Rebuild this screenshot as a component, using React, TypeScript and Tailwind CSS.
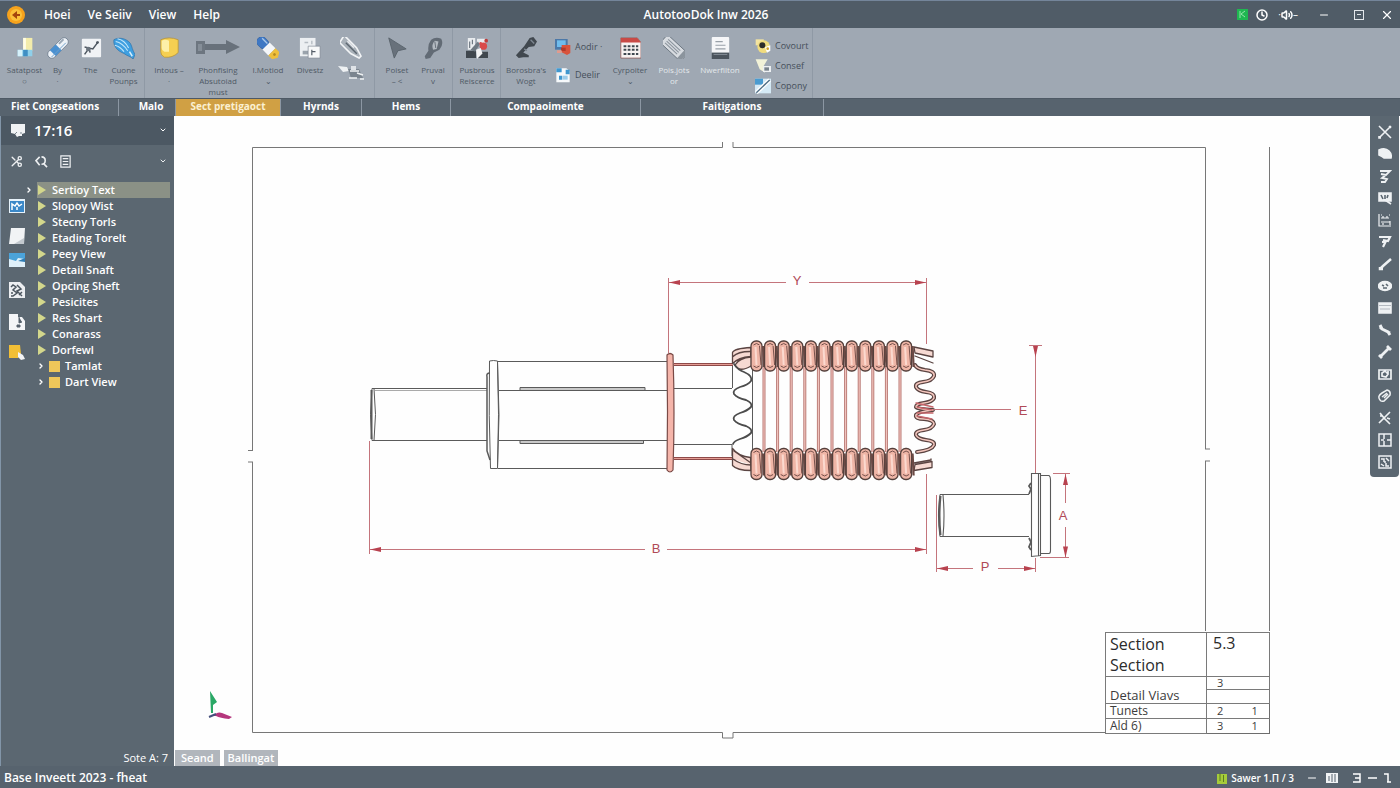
import React, { useState } from "react";
import { clsx } from "clsx";
import { ChevronDown, ChevronRight, Clock, Minus, Scissors, Volume2, X } from "lucide-react";

/* ---------- ribbon icons, all on a 24x24 grid ---------- */

const ribbonArt: Record<string, React.ReactNode> = {
  stand: (
    <>
      <path d="M10 1h10v14H10z" fill="#f3ecab" />
      <path d="M10 1h3v14h-3z" fill="#fffde6" />
      <path d="M4 14h16v7H4z" fill="#8fd0ea" />
      <path d="M10 14h5v7h-5z" fill="#3f8fc4" />
      <path d="M4 14h5v7H4z" fill="#d6f1fa" />
    </>
  ),
  capsule: (
    <g transform="rotate(-45 12 12)">
      <rect x="-2" y="7.500" width="28" height="9" rx="4.500" fill="#eef3f8" stroke="#5d6d80" strokeWidth=".7" />
      <rect x="4" y="7.500" width="9" height="9" fill="#4a90d0" />
      <path d="M16 9.500h7" stroke="#9aa8b6" strokeWidth="2" />
      <path d="M0 14h22" stroke="#6f9fc9" />
    </g>
  ),
  plot: (
    <>
      <rect x="2" y="2" width="21" height="20" rx="1" fill="#f0f2f5" />
      <path d="M5 19l5-7 4 1 6-8M5 11l5 1 1 5" fill="none" stroke="#4d5660" strokeWidth="1.600" />
      <circle cx="9" cy="13" r="2.500" fill="#6b747e" />
      <circle cx="19" cy="6" r="1.500" fill="#4d5660" />
    </>
  ),
  leaf: (
    <>
      <path d="M1 3c5-3 13-2 18 4 2 4 2 7 5 12l-2 5c-3-3-6-3-10-6C4 15 0 9 1 3z" fill="#3f9fe0" stroke="#2a6fa8" strokeWidth=".7" />
      <path d="M3 5c5 1 9 4 13 10M5 2c5 1 9 4 12 10M2 9c4 1 7 3 10 7" fill="none" stroke="#c4e8fb" strokeWidth="1.200" />
      <path d="M18 16l3 5" stroke="#d8f0fc" strokeWidth="1.600" />
    </>
  ),
  shield: (
    <>
      <path d="M3 3q9-4 19 0v14q-6 6-15 5-4-2-4-6z" fill="#f5cf52" stroke="#b98e22" strokeWidth=".7" />
      <path d="M4 4q4-2 8 0v12H7q-3-1-3-4z" fill="#fdf0a8" />
    </>
  ),
  pencil: (
    <g transform="rotate(45 12 12)">
      <rect x="-3" y="6.500" width="13" height="11" rx="4" fill="#3f78c4" stroke="#2d5a96" strokeWidth=".6" />
      <path d="M0 9h8" stroke="#a9c8ea" strokeWidth="1.500" />
      <rect x="9" y="6.500" width="9" height="11" fill="#f4f6f9" />
      <path d="M18 6.500h6l3 5.500-3 5.500h-6z" fill="#eebf3c" />
      <circle cx="22" cy="12" r="1.500" fill="#b58a22" />
    </g>
  ),
  sheets: (
    <>
      <path d="M1 1h17v20H1z" fill="#eceff2" />
      <path d="M4 15h6v4H4z" fill="#9aa3ac" />
      <path d="M14 4v4M6 6h4" stroke="#b5bcc3" strokeWidth="1.500" />
      <path d="M10 10h13v13H10z" fill="#f8f9fa" stroke="#7a848e" strokeWidth=".7" />
      <path d="M14 14v6M14 16h4" stroke="#555e68" strokeWidth="1.300" />
    </>
  ),
  clip: (
    <g transform="rotate(45 12 12)" fill="none" stroke="#f2f4f6" strokeWidth="1.800">
      <path d="M-3 7.500h19l10 3v3l-10 3H-1z" fill="#a9b1b9" />
      <path d="M4 12h17" stroke="#5c6670" strokeWidth="1.500" />
      <path d="M4 9.500h10" strokeWidth="1.200" />
    </g>
  ),
  arrow: <path d="M3 1l19 12-9 2-4 8z" fill="#68717b" stroke="#59626b" />,
  knob: (
    <>
      <path d="M10 3q5-4 11-1 3 6-2 12l-6 3-4 6-5 1-1-3 4-6q-1-7 3-12z" fill="#626b75" />
      <path d="M14 4l4 1-2 8-4 1q-2-6 2-10z" fill="#b3bac1" />
      <path d="M14 5l1 7" stroke="#626b75" />
    </>
  ),
  people: (
    <>
      <path d="M0 15h11v8H0zM13 16h11v7H13z" fill="#40474e" />
      <path d="M2 1h8v13H2zM12 2h9v5h-9z" fill="#e9ecef" />
      <path d="M4 5v7M7 3v5" stroke="#6f7983" strokeWidth="1.300" />
      <path d="M5 14l8-9 2 3-5 8z" fill="#6f7983" />
      <circle cx="19" cy="10" r="4" fill="#d94a4a" />
      <path d="M11 14l5-2 2 6-6 6z" fill="#f3f4f5" />
      <circle cx="22" cy="4" r="2" fill="#c03a3a" />
      <circle cx="16" cy="7" r="1.500" fill="#d94a4a" />
    </>
  ),
  torch: (
    <>
      <path d="M16 1l4-1 4 5-3 5-6 1-6 6 6 3v2H9l-5 1-3-3 9-10z" fill="#41484f" />
      <path d="M17 3l4 4M10 13l3 2" stroke="#7c8690" strokeWidth="1.500" />
    </>
  ),
  calendar: (
    <>
      <path d="M2 1h18l4 5v17H2z" fill="#f8f3f2" stroke="#8d5450" strokeWidth=".8" />
      <path d="M2 1h18l4 5H2z" fill="#c94a46" />
      <path d="M5 10h16M5 14h16M5 18.500h16" stroke="#3f4850" strokeWidth="2.200" strokeDasharray="3 1.500" />
    </>
  ),
  battery: (
    <g transform="rotate(43 12 12)">
      <rect x="-3" y="6" width="30" height="12" rx="1.500" fill="#d7dbe0" stroke="#6b7580" />
      <path d="M1 9.500h18M1 12h18M1 14.500h18" stroke="#8b949d" strokeWidth="1.200" />
      <rect x="22" y="6.500" width="4.500" height="11" fill="#8b949d" />
    </g>
  ),
  drive: (
    <>
      <rect x="3" y="0" width="19" height="18" rx="1" fill="#f5f6f8" />
      <path d="M7 5h8M7 9h11M7 13h11" stroke="#98a0a8" strokeWidth="1.300" />
      <path d="M3 17h19v7H3z" fill="#4b545d" />
      <path d="M5 19h15" stroke="#8b949d" />
    </>
  ),
};

const smallArt: Record<string, React.ReactNode> = {
  monitor: (
    <>
      <path d="M0 0h19v16H0z" fill="#4b78a8" />
      <path d="M3 2h13v10H3z" fill="#6fbcec" />
      <path d="M10 9h13v12l-5 3-8-4z" fill="#d8533c" />
      <path d="M9 13h7v5H9z" fill="#b23a2b" />
      <path d="M3 17h7v4H3z" fill="#e39a8c" />
    </>
  ),
  save: (
    <>
      <path d="M2 2h15l5 4v17H2z" fill="#f6f9fb" />
      <path d="M2 2h8v6H2zM16 4h6v7h-6zM6 13h5v6H6z" fill="#3f97cf" />
      <path d="M12 13h7v6h-7z" fill="#9dcdea" />
    </>
  ),
  folder: (
    <>
      <path d="M1 2h12v9H1z" fill="#f4e4a0" />
      <circle cx="13" cy="13" r="9.500" fill="#f1dc7e" />
      <circle cx="11" cy="11" r="4.500" fill="#2e2c2a" />
      <path d="M15 14l8-3v8l-5 3z" fill="#fff" />
      <circle cx="19" cy="16" r="2" fill="#d5a32c" />
    </>
  ),
  funnel: (
    <>
      <path d="M1 2h18l-6 10 2 10-8-5z" fill="#f2f2d8" />
      <path d="M12 12h12v9H12z" fill="#edf0f2" />
      <path d="M14 14h7v5h-7z" fill="#7a848d" />
    </>
  ),
  wand: (
    <>
      <path d="M0 1h24v22H0z" fill="#d5eaf6" />
      <path d="M0 1h12v9H0z" fill="#4a9bd0" />
      <path d="M2 22L22 3" stroke="#fff" strokeWidth="6" />
      <path d="M2 22L22 3" stroke="#4e6e86" strokeWidth="2" />
    </>
  ),
};

function RibbonItem({ icon, lines, width, light }: { icon: string; lines: string[]; width: string; light?: boolean }) {
  return (
    <button className={clsx("flex shrink-0 flex-col items-center pt-2 text-[8px] leading-[11px]", width, light ? "text-[#e4e8ec]" : "text-[#4f5a66]")}>
      <svg viewBox="0 0 24 24" className="mb-1 h-6 w-6 p-px">{ribbonArt[icon]}</svg>
      {lines.map((line) => (
        <span key={line} className="whitespace-nowrap">{line}</span>
      ))}
    </button>
  );
}

function RibbonRow({ icon, label }: { icon: string; label: string }) {
  return (
    <button className="flex items-center gap-1 text-[9px] leading-[10px] text-[#454f5a]">
      <svg viewBox="0 0 24 24" className="h-4 w-4 shrink-0">{smallArt[icon]}</svg>
      <span className="whitespace-nowrap">{label}</span>
    </button>
  );
}

const group = "flex shrink-0 border-r border-[#8f99a5]";

function Ribbon() {
  return (
    <div className="flex h-[70px] shrink-0 overflow-hidden bg-[#9fa8b3]">
      <div className={clsx(group, "w-[145px] pl-2")}>
        <RibbonItem icon="stand" lines={["Satatpost", "○"]} width="w-[33px]" />
        <RibbonItem icon="capsule" lines={["By", "·"]} width="w-[33px]" />
        <RibbonItem icon="plot" lines={["The"]} width="w-[33px]" />
        <RibbonItem icon="leaf" lines={["Cuone", "Pounps"]} width="w-[33px]" />
      </div>
      <div className={clsx(group, "w-[230px]")}>
        <RibbonItem icon="shield" lines={["Intous –", "·"]} width="w-[48px]" />
        <button className="flex w-[50px] shrink-0 flex-col items-center pt-2 text-[8px] leading-[11px] text-[#4f5a66]">
          <svg viewBox="0 0 46 24" className="mb-1 h-6 w-[46px]">
            <path d="M1 5h9v13H1z" fill="#6d7680" />
            <path d="M3 8h4v7H3z" fill="#858e98" />
            <path d="M10 8h21V4l14 7-14 7v-4H10z" fill="#68717b" />
          </svg>
          <span className="whitespace-nowrap">Phonfising</span>
          <span className="whitespace-nowrap">Absutoiad</span>
          <span className="whitespace-nowrap">must</span>
        </button>
        <RibbonItem icon="pencil" lines={["I.Motiod", "⌄"]} width="w-[50px]" />
        <RibbonItem icon="sheets" lines={["Divestz"]} width="w-[34px]" />
        <button aria-label="Clip" className="flex w-[48px] shrink-0 flex-col items-center pt-2">
          <svg viewBox="0 0 24 24" className="mb-1 h-6 w-6 p-px">{ribbonArt.clip}</svg>
          <svg viewBox="0 0 28 18" className="h-[18px] w-7">
            <path d="M1 2l9 1 2 4-6 1z" fill="#eef1f3" />
            <path d="M11 5h11l4 9H14z" fill="#7b858f" />
            <path d="M13 7h9M12 14h8M20 9l6 2M23 15h4" stroke="#eef1f3" strokeWidth="1.500" />
            <path d="M14 2h5v4h-5z" fill="#dfe3e7" />
          </svg>
        </button>
      </div>
      <div className={clsx(group, "w-[78px] pl-1")}>
        <RibbonItem icon="arrow" lines={["Poiset", "– <"]} width="w-[36px]" />
        <RibbonItem icon="knob" lines={["Pruval", "v"]} width="w-[36px]" />
      </div>
      <div className={clsx(group, "w-[48px]")}>
        <RibbonItem icon="people" lines={["Pusbrous", "Reiscerce"]} width="w-[48px]" />
      </div>
      <div className={clsx(group, "w-[312px]")}>
        <RibbonItem icon="torch" lines={["Borosbra's", "Wogt"]} width="w-[50px]" />
        <div className="flex w-[58px] shrink-0 flex-col gap-3 pt-[11px] pl-1">
          <RibbonRow icon="monitor" label="Aodir ·" />
          <RibbonRow icon="save" label="Deelir" />
        </div>
        <RibbonItem icon="calendar" lines={["Cyrpoiter", "⌄"]} width="w-[42px]" />
        <RibbonItem icon="battery" lines={["Pois.jots", "or"]} width="w-[46px]" light />
        <RibbonItem icon="drive" lines={["Nwerfilton"]} width="w-[46px]" light />
        <div className="flex shrink-0 flex-col gap-1 pt-[10px] pl-3">
          <RibbonRow icon="folder" label="Covourt" />
          <RibbonRow icon="funnel" label="Consef" />
          <RibbonRow icon="wand" label="Copony" />
        </div>
      </div>
    </div>
  );
}

/* ---------- title bar and ribbon tabs ---------- */

function TitleBar() {
  return (
    <header className="grid h-7 shrink-0 grid-cols-[1fr_auto_1fr] items-center border-t border-[#74859a] bg-[#505c67] text-white">
      <div className="flex items-center pl-[7px]">
        <svg viewBox="0 0 18 18" className="h-[18px] w-[18px]">
          <circle cx="9" cy="9" r="9" fill="#f6a21c" />
          <circle cx="9" cy="9" r="6" fill="#fbc13a" />
          <path d="M5 9l5-4v8zM10 8h3v2h-3z" fill="#a5460c" />
        </svg>
        <nav className="flex gap-[17px] pl-[19px] text-[12px] leading-4 font-semibold">
          <button>Hoei</button>
          <button>Ve Seiiv</button>
          <button>View</button>
          <button>Help</button>
        </nav>
      </div>
      <h1 className="pl-3 text-[12px] leading-4 font-semibold">AutotooDok Inw 2026</h1>
      <div className="flex items-center justify-end pr-[6px]">
        <svg viewBox="0 0 11 11" className="mr-2 h-[11px] w-[11px]">
          <path d="M0 0h11v11H0z" fill="#1fb851" />
          <path d="M8 2L4 5l4 3M3 2v7" stroke="#97e6ac" fill="none" />
        </svg>
        <Clock className="mr-[10px] h-3 w-3" strokeWidth={3} />
        <span className="text-[10px]">·</span>
        <Volume2 className="h-3 w-3" strokeWidth={3} />
        <span className="mr-5 text-[10px]">–</span>
        <button aria-label="Minimise" className="mr-6"><Minus className="h-3 w-3" /></button>
        <button aria-label="Maximise" className="mr-4 flex h-[10px] w-[10px] items-center justify-center border border-[#e4e8ec]">
          <span className="h-px w-1 bg-[#e4e8ec]" />
        </button>
        <button aria-label="Close"><X className="h-[14px] w-[14px]" /></button>
      </div>
    </header>
  );
}

const tabs = [
  { label: "Fiet Congseations", className: "w-[119px] pr-2" },
  { label: "Malo", className: "w-[57px] pl-2" },
  { label: "Sect pretigaoct", className: "w-[105px]" },
  { label: "Hyrnds", className: "w-[81px]" },
  { label: "Hems", className: "w-[89px]" },
  { label: "Compaoimente", className: "w-[190px]" },
  { label: "Faitigations", className: "w-[183px]" },
];

function RibbonTabs() {
  const [active, setActive] = useState("Sect pretigaoct");

  return (
    <nav className="flex h-[18px] shrink-0 border-t border-[#4e5965] bg-[#57636e] text-[10px] leading-[14px] font-bold text-white">
      {tabs.map((tab) => (
        <button
          key={tab.label}
          onClick={() => setActive(tab.label)}
          className={clsx("shrink-0 border-r border-[#8c97a3] pb-[3px] text-center whitespace-nowrap", tab.className, active === tab.label && "bg-[#d0a044] text-[#fbf0d2]")}
        >
          {tab.label}
        </button>
      ))}
    </nav>
  );
}

/* ---------- left browser panel ---------- */

const shortcuts = [
  {
    gap: "mt-4",
    art: (
      <>
        <path d="M0 1h16v14H0z" fill="#e8f3fb" />
        <path d="M1 3h14v11H1z" fill="#3b88c8" />
        <path d="M3 12V6l3 2 2-3 2 3 3-2M8 12V9" stroke="#fff" strokeWidth="1.500" fill="none" />
      </>
    ),
  },
  { gap: "mt-[14px]", art: (<><path d="M2 0h14l-1 16H0z" fill="#f1f3f5" /><path d="M15 10v6H5z" fill="#c3c9cf" /></>) },
  {
    gap: "mt-2",
    art: (<><path d="M0 1h16v14H0z" fill="#dff0fa" /><path d="M0 1h16v6L9 6 7 9 0 7z" fill="#4ba3da" /><path d="M9 9l7-3v4z" fill="#2f7db4" /></>),
  },
  {
    gap: "mt-[14px]",
    art: (
      <>
        <path d="M0 0h11l5 5v11H0z" fill="#eceef1" />
        <path d="M2 5l2-2 3 2-3 3 4 3-4 3H2M8 3l4 4-4 2 5 5M10 13l3-3M3 10v2" stroke="#4b555f" strokeWidth="1.500" fill="none" />
      </>
    ),
  },
  { gap: "mt-4", art: (<><path d="M0 0h9v16H0zM9 3h4l3 4v9H9z" fill="#f4f5f7" /><path d="M10 3v6l3-1M8 11h3v2H8z" fill="#56616c" stroke="#56616c" /></>) },
  {
    gap: "mt-[14px]",
    art: (<><path d="M0 1h11l1 9-3 4H0z" fill="#f2bf36" /><path d="M9 8l5 3 2 4-4 1-3-3z" fill="#f3f4f6" /></>),
  },
];

const treeItems = [
  "Sertioy Text", "Slopoy Wist", "Stecny Torls", "Etading Torelt", "Peey View", "Detail Snaft",
  "Opcing Sheft", "Pesicites", "Res Shart", "Conarass", "Dorfewl",
];

function Sidebar() {
  const [selected, setSelected] = useState(treeItems[0]);

  return (
    <aside className="flex w-[174px] shrink-0 flex-col border-l border-[#8295a8] bg-[#5b6771] text-white">
      <div className="flex h-[29px] items-center bg-[#4c5863] pr-[7px] pb-[2px] pl-[9px]">
        <svg viewBox="0 0 16 14" className="h-[14px] w-4">
          <path d="M1 1h14v9l-3 1v2H9l-2 1-2-3-4-1z" fill="#f0f2f4" />
          <path d="M5 11l2-2M11 11V9" stroke="#7b858f" />
        </svg>
        <span className="grow pl-2 text-[15px] leading-5 font-semibold">17:16</span>
        <ChevronDown className="h-2 w-2" strokeWidth={3} />
      </div>
      <div className="flex h-8 items-center pr-[7px] pl-[9px] text-[#eef0f2]">
        <button aria-label="Cut"><Scissors className="h-[13px] w-[13px] rotate-180" strokeWidth={2.5} /></button>
        <button aria-label="Find" className="ml-3">
          <svg viewBox="0 0 14 14" className="h-[13px] w-[13px]" fill="none" stroke="currentColor" strokeWidth="1.700">
            <path d="M5 2L1 6l4 5M7 2q4 0 4 4t-4 4M9 9l4 4" />
          </svg>
        </button>
        <button aria-label="Properties" className="ml-[11px]">
          <svg viewBox="0 0 14 14" className="h-[13px] w-[13px]" fill="none" stroke="currentColor" strokeWidth="1.300">
            <path d="M2 1h10v12H2zM4 4h6M4 7h6M4 10h6" />
          </svg>
        </button>
        <span className="grow" />
        <ChevronDown className="h-2 w-2" strokeWidth={3} />
      </div>

      <div className="flex grow pt-[5px]">
        <div className="flex w-6 shrink-0 flex-col items-end">
          {shortcuts.map((item, i) => (
            <button key={i} aria-label={`Shortcut ${i + 1}`} className={item.gap}>
              <svg viewBox="0 0 16 16" className="h-4 w-4">{item.art}</svg>
            </button>
          ))}
        </div>
        <ul className="grow pr-1 text-[11px] leading-4 font-semibold">
          {treeItems.map((item) => (
            <li key={item} className="flex items-center">
              <span className="flex w-3 shrink-0 justify-center pr-1">
                {item === selected && <ChevronRight className="h-2 w-2" strokeWidth={4} />}
              </span>
              <button
                onClick={() => setSelected(item)}
                className={clsx("flex grow items-center gap-[6px] pl-px text-left whitespace-nowrap", item === selected && "bg-[#8b9186]")}
              >
                <svg viewBox="0 0 8 10" className="h-[10px] w-2"><path d="M0 0l8 5-8 5z" fill="#d3d78c" /></svg>
                {item}
              </button>
            </li>
          ))}
          {["Tamlat", "Dart View"].map((item) => (
            <li key={item}>
              <button className="flex items-center pl-3">
                <ChevronRight className="mr-1 h-2 w-2" strokeWidth={4} />
                <span className="mr-[5px] h-[11px] w-[11px] bg-[#efc75a]" />
                {item}
              </button>
            </li>
          ))}
        </ul>
      </div>

      <p className="pr-[6px] text-right text-[11px] leading-4">Sote A: 7</p>
    </aside>
  );
}

/* ---------- drawing sheet ---------- */

const coils = Array.from({ length: 12 }, (_, i) => 756.5 + i * 13.6);
const slots = coils.slice(0, 11).map((x) => x + 7.5);

const springLeft =
  "M734 364q4 6 10 8 9 4 7 9-3 4-11 6-8 3-6 7 3 4 12 6 7 3 5 7-4 4-11 6-8 3-6 7 3 4 12 6 7 3 5 7-4 4-11 6-6 2-7 5";
const springRight =
  "M915 365q2 4 10 5 10 1 9 6-2 5-11 6-8 1-7 5 2 4 10 5 9 1 8 6-2 4-10 5-8 1-8 4 1 2 17 3-16 2-17 5-1 4 8 4 10 1 10 5-2 5-10 6-9 1-8 5 2 4 10 5 9 1 8 5-2 5-17 7";

function Arrow({ x, y, turn }: { x: number; y: number; turn: number }) {
  return <path d="M0 0l11-2.500v5z" fill="#b8424f" transform={`translate(${x} ${y}) rotate(${turn})`} />;
}

function Coil({ x, y, height }: { x: number; y: number; height: number }) {
  return (
    <g transform={`translate(${x} ${y})`}>
      <rect x="-5.500" y="0" width="11" height={height} rx="5" fill="#efb5a6" stroke="#54403c" strokeWidth="1.300" />
      <path d={`M-3 4q3-3 6 0M3 5L4.500 ${height - 6}M-3 ${height - 5}q3 3 6 0`} fill="none" stroke="#76504b" />
      <path d={`M6.500 5l1 ${height - 9}`} stroke="#6b4944" strokeWidth="2.200" />
      <path d={`M-1 6l1 ${height - 12}`} stroke="#fbd9cf" strokeWidth="2" />
    </g>
  );
}

function Drawing() {
  return (
    <svg viewBox="174 116 1226 650" className="absolute inset-0 h-full w-full" fill="none">
      {/* sheet border with centring marks */}
      <g stroke="#777" strokeWidth="1">
        <path d="M252.500 450V147.500H722.500V142M733 142v5.500h472.500V449M248 450.500h5M248 462h5M252.500 462v270.500H722.500V738h10.500v-5.500h373M1205.500 461v170M1205 449h5M1205 461h5" />
        <path d="M1269.500 147v484" />
      </g>

      {/* shaft */}
      <g stroke="#5a5a5a" strokeWidth="1">
        <path d="M372 388.500H487M372 440.500H487M374 388.500q3 26 0 52M372 388.500q-3 26 0 52" />
        <path d="M371.500 390v49" strokeWidth="2" />
        <path d="M375 390.500H487" stroke="#aaa" />
        <path d="M490 373q-4 0-3 4v64M487 441v10l3 9" strokeWidth="1.500" />
        <path d="M489.500 361q4-1 8 0q2 53 0 107.500h-7q-2-52-1-107.500zM497.500 362q3 53 0 106" />
        <path d="M498 361.500H667M498 468.500H667M499 390.500H667M499 440.500H667M674 388.500H732M674 444.500H732V456M732.500 365v23" />
        <path d="M520 390v-2.500H645V390M520 441v2.500H643.500V441" fill="#c9c9c9" />
      </g>

      {/* flange and tie rods */}
      <path d="M674 364.500H733M674 458.500H748" stroke="#8e4a49" strokeWidth="3" />
      <path d="M674 364.500H733M674 458.500H748" stroke="#e59c94" />
      <path d="M667 355q3-3 6 0 2 58 0 115-3 4-6 0 1-58 0-115z" fill="#f5b5aa" stroke="#7a4a46" strokeWidth="1.200" />

      {/* spring ends */}
      <g strokeLinecap="round" strokeLinejoin="round" stroke="#5a4442" strokeWidth="1.300">
        <path d="M751 347.500q-17 1-18.500 5v11q6-6 18-7zM750 351.500q-12 0-17 5M751 357q-12 1-16 8 4 8 16 1" fill="#f6d9d2" />
        <path d={springLeft} stroke="#4c4c4c" strokeWidth="1.800" />
        <path d="M751 470.500q-14 0-18.500-5v-17q6 8 18 9zM734 451l17 12M733 459q8 6 18 6" fill="#f6d9d2" />
        <path d="M914 347l19 4v6l-18-4zM915 356l18 7M914 463l17-3v-1M914 470.500l18-3v-6l-17 3z" fill="#f6d9d2" />
        <path d={springRight} strokeWidth="4" />
        <path d={springRight} stroke="#f4c6bd" strokeWidth="1.600" />
        <path d="M916 403l17 4M917 413h16M917 416l15 3M917 407l15 3" stroke="#c7656a" />
      </g>

      {/* armature core */}
      <path d="M752.500 370v80" stroke="#5a5a5a" />
      {slots.map((x) => (
        <g key={x}>
          <path d={`M${x} 366v86`} stroke="#b87873" strokeWidth="3" />
          <path d={`M${x} 366v86`} stroke="#f0c2bc" strokeWidth="1.200" />
        </g>
      ))}
      {coils.map((x) => (
        <g key={x}>
          <Coil x={x} y={341} height={30} />
          <Coil x={x} y={448.5} height={31} />
        </g>
      ))}

      {/* small stub */}
      <g stroke="#5a5a5a" strokeWidth="1.100">
        <path d="M940 494.500h89M940 536.500h89M940 494.500q-3 21 0 42M943 495q2 21 0 41" />
        <path d="M940.500 496q-2 20 0 39" strokeWidth="2" />
        <path d="M1031.500 473.500h9v82l-9 1zM1038.500 474v82M1041 475.500h8q1.500 1 1.500 4v71q0 3-1.500 3h-8" />
        <path d="M1031 483l-2 3 2 3M1031 489l-2 5M1029 538l2 4-2 5 2 3" strokeWidth="1.800" />
      </g>

      {/* dimensions */}
      <g stroke="#c4747c" strokeWidth="1">
        <path d="M668.500 278v75M926.500 278v66M669 282.500h117M809 282.500h117" />
        <path d="M369.500 441v113M926.500 474v80M370 549.500h275M667 549.500h259" />
        <path d="M933 409.500h78M1035.500 345v128M1029 345.500h13" />
        <path d="M1065.500 474v29M1065.500 527v31M1053 473.500h17M1040 557.500h29" />
        <path d="M936.500 495v77M1035.500 558v14M937 568.500h36M998 568.500h37" />
      </g>
      <Arrow x={669} y={282.5} turn={0} />
      <Arrow x={926} y={282.5} turn={180} />
      <Arrow x={370} y={549.5} turn={0} />
      <Arrow x={926} y={549.5} turn={180} />
      <Arrow x={1035.5} y={357} turn={-90} />
      <Arrow x={1065.5} y={474} turn={90} />
      <Arrow x={1065.5} y={557.5} turn={-90} />
      <Arrow x={937} y={568.5} turn={0} />
      <Arrow x={1035} y={568.5} turn={180} />
      <g fill="#b04a57" fontSize="13" textAnchor="middle" className="font-['Liberation_Sans']">
        <text x="797" y="285">Y</text>
        <text x="656" y="553">B</text>
        <text x="1023" y="415">E</text>
        <text x="1063" y="520">A</text>
        <text x="985" y="571">P</text>
      </g>

      {/* axis triad */}
      <path d="M210 691l7 11-4 3v8h-2z" fill="#2aa866" />
      <path d="M212 716q6-5 10-3l10 4-3 2q-9-1-13-3z" fill="#b5367c" />
      <path d="M209 717l7-3" stroke="#46507c" strokeWidth="2" />
    </svg>
  );
}

const cell = "border-[#7a7a7a]";

function TitleBlock() {
  return (
    <table className="absolute right-[130px] bottom-8 border-collapse border border-[#6d6d6d] bg-white text-[11px] leading-[12px] text-[#3c3c3c]">
      <tbody>
        <tr className="h-11 text-[16px] leading-[21px] text-[#2b2b2b]">
          <td className={clsx(cell, "w-[101px] border pl-1")}>Section<br />Section</td>
          <td colSpan={2} className={clsx(cell, "border pl-[6px] align-top")}>5.3</td>
        </tr>
        <tr className="h-[13px]">
          <td rowSpan={2} className={clsx(cell, "border pl-1 align-bottom text-[13px] leading-4")}>Detail Viavs</td>
          <td colSpan={2} className={clsx(cell, "border pl-[10px]")}>3</td>
        </tr>
        <tr className="h-[14px]">
          <td colSpan={2} className={clsx(cell, "border")} />
        </tr>
        <tr className="h-[15px]">
          <td className={clsx(cell, "border pl-1 text-[12px]")}>Tunets</td>
          <td className={clsx(cell, "w-[31px] border-b pl-[10px]")}>2</td>
          <td className={clsx(cell, "w-8 border-b pl-[14px]")}>1</td>
        </tr>
        <tr className="h-[15px]">
          <td className={clsx(cell, "border pl-1 text-[12px]")}>Ald 6)</td>
          <td className={clsx(cell, "pl-[10px]")}>3</td>
          <td className={clsx(cell, "pl-[14px]")}>1</td>
        </tr>
      </tbody>
    </table>
  );
}

/* ---------- right tool strip, icons on a 14x14 grid ---------- */

const tools: { name: string; art: React.ReactNode }[] = [
  { name: "Trim", art: <path d="M1 1l12 12M13 1L1 13M11 1l2 2M1 11v2h2" /> },
  { name: "Region", art: <path d="M1 3q6-3 10 1 3 3 2 7H6q-2-2-5-3z" fill="currentColor" /> },
  { name: "Polyline", art: <path d="M2 2h10l-4 4-5-1M9 5L4 9l5 1-2 3H3" strokeWidth="1.800" /> },
  { name: "Picture", art: (<><path d="M1 2h12v8H1z" fill="currentColor" /><path d="M3 4l2 4M7 4v4M10 4l-1 3" stroke="#5b6771" /><path d="M7 9l6 4" /></>) },
  { name: "Measure", art: <path d="M1 1v12h12M3 2h1M11 2h1M3 5h8M3 9h9M5 3v2M9 3v2M12 8v4M5 10v2" strokeWidth="1.200" /> },
  { name: "Chamfer", art: <path d="M1 2h11l-2 4-5-1M8 6l-3 6M4 7h3" strokeWidth="2.200" /> },
  { name: "Pen", art: <path d="M2 12l3-3 8-7M2 10v2h3" strokeWidth="2.500" /> },
  { name: "Ellipse", art: (<><ellipse cx="7" cy="7" rx="6.500" ry="4.500" fill="currentColor" /><path d="M4 6l2 1M8 5l2 2M5 9h4" stroke="#5b6771" /></>) },
  { name: "Panel", art: (<><path d="M1 2h12v10H1z" fill="currentColor" /><path d="M1 4.500h12M2 8h10" stroke="#a3abb2" strokeWidth=".8" /></>) },
  { name: "Link", art: <path d="M2 2l2 4 6 3 2 3M2 4l2 2M10 9l2 1" strokeWidth="3" /> },
  { name: "Bone", art: <path d="M3 11l8-8M1 10l3 3M9 1l4 4" strokeWidth="2.800" /> },
  { name: "Camera", art: <path d="M1 3h12v9H1zM4 6l3-2 3 3-2 3-4-1zM10 4v3" strokeWidth="1.700" /> },
  { name: "Paper clip", art: <path d="M2 11q-3-4 2-7l5-3q4 1 3 5l-6 6q-3 1-4-1zM4 8l5-4M6 9l4-4" strokeWidth="1.500" /> },
  { name: "Cut", art: <path d="M2 2l4 5 6 6M12 1L5 8M1 12l4-4M2 5h3M9 7l3 1" strokeWidth="1.700" /> },
  { name: "Window", art: <path d="M1 1h12v12H1zM6 1v5M6 8v5M9 7h4M3 7h3" strokeWidth="1.500" /> },
  { name: "Pattern", art: <path d="M1 1h12v12H1zM3 4h3v3M8 3l3 3M3 9l3 2M8 8v3h3M6 7h2" strokeWidth="1.500" /> },
];

function ToolStrip() {
  return (
    <div className="absolute top-0 right-px flex w-[29px] flex-col items-center rounded-b-sm bg-[#5b6771] pt-[5px] pb-1 text-[#eef1f3]">
      {tools.map((tool) => (
        <button key={tool.name} aria-label={tool.name} className="flex h-[22px] w-full items-center justify-center">
          <svg viewBox="0 0 14 14" className="h-[14px] w-[14px]" fill="none" stroke="currentColor" strokeWidth="1.600">{tool.art}</svg>
        </button>
      ))}
    </div>
  );
}

function StatusBar() {
  return (
    <footer className="flex h-[22px] shrink-0 items-center bg-[#57636e] pt-[2px] pr-2 pl-1 text-[12px] leading-4 font-semibold text-white">
      <span className="grow">Base Inveett 2023 - fheat</span>
      <svg viewBox="0 0 10 11" className="mr-1 h-[11px] w-[10px]">
        <path d="M0 1h10v10H0z" fill="#a5cc3a" />
        <path d="M3 0v8M6.500 2v7" stroke="#5b7a22" />
      </svg>
      <span className="mr-3 text-[10px]">Sawer 1.Π / 3</span>
      <Minus className="mr-2 h-3 w-3" />
      <svg viewBox="0 0 12 12" className="mr-[14px] h-3 w-3">
        <path d="M0 1h12v10H0z" fill="#f1f3f5" />
        <path d="M3 4v5M6 2v8M9 2v8" stroke="#57636e" />
      </svg>
      <svg viewBox="0 0 40 12" className="h-3 w-10" fill="none" stroke="currentColor" strokeWidth="1.500">
        <path d="M1 2h7v8H1M3 6h5M16 6h9M32 2h4v8M35 10h4" />
      </svg>
    </footer>
  );
}

export default function App() {
  return (
    <div className="flex h-screen flex-col overflow-hidden bg-white font-['Open_Sans',sans-serif]">
      <TitleBar />
      <Ribbon />
      <RibbonTabs />
      <div className="flex min-h-0 grow">
        <Sidebar />
        <main className="relative flex min-w-0 grow flex-col justify-end bg-[#fefefe]">
          <Drawing />
          <TitleBlock />
          <ToolStrip />
          <div className="relative flex gap-1 pl-px text-[11px] leading-4 font-semibold text-white">
            <button className="bg-[#b1b6bc] px-[6px]">Seand</button>
            <button className="bg-[#b1b6bc] px-1">Ballingat</button>
          </div>
        </main>
      </div>
      <StatusBar />
    </div>
  );
}
